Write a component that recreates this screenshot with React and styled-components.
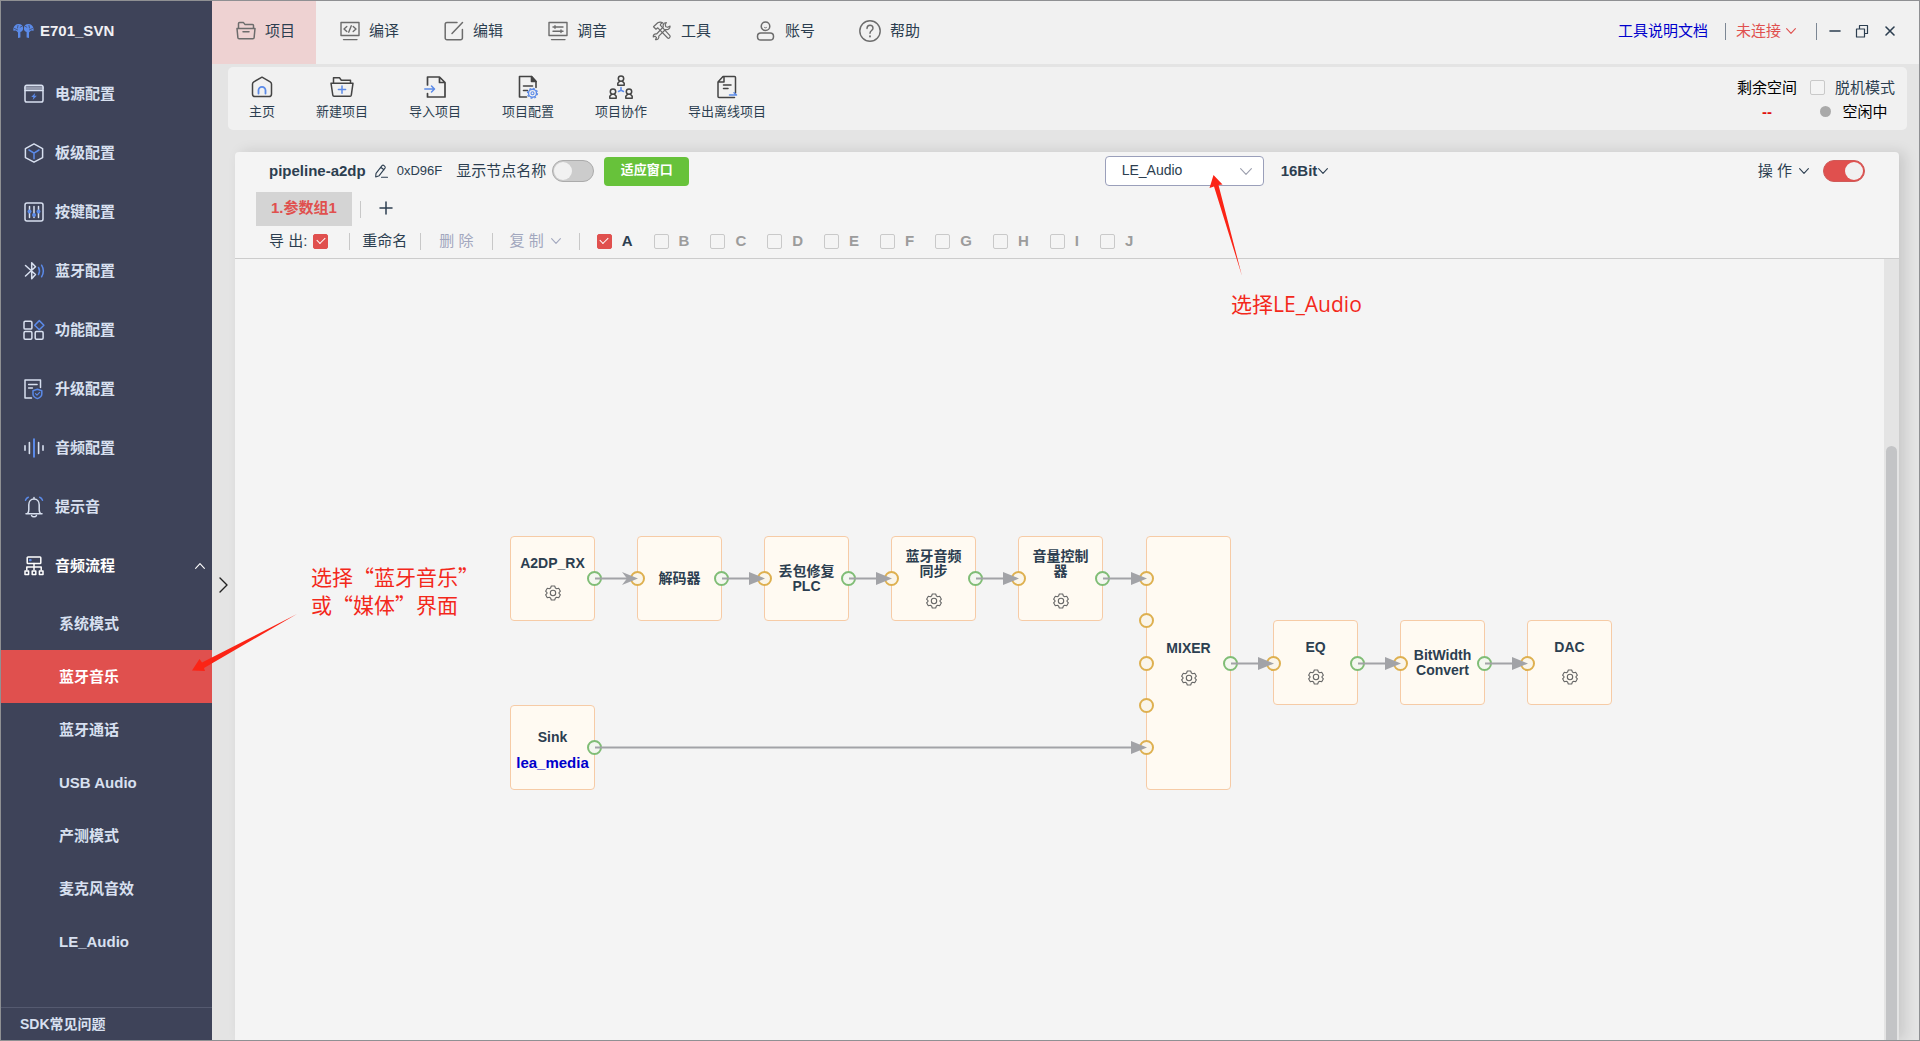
import React from 'react';
import styled, { createGlobalStyle, css } from 'styled-components';

const ink = '#2c3e50';
const red = '#e0504e';
const blue = '#5b8ae8';

const GlobalStyle = createGlobalStyle`
  *, *::before, *::after { box-sizing: border-box; }
  body {
    margin: 0;
    font-family: "Liberation Sans", "Noto Sans CJK SC", sans-serif;
    font-size: 15px;
    line-height: 20px;
    color: ${ink};
  }
  button, select, input { font: inherit; color: inherit; margin: 0; }
  a { text-decoration: none; }
`;

/* ---------- frame ---------- */

const Window = styled.div`
  position: relative;
  display: flex;
  height: 100vh;
  border: 1px solid #8f9093;
  background: #e4e4e4;
  overflow: hidden;
`;

const Main = styled.main`
  flex: 1;
  min-width: 0;
  display: flex;
  flex-direction: column;
`;

const PlainButton = styled.button`
  display: flex;
  align-items: center;
  padding: 0;
  border: 0;
  background: none;
  white-space: nowrap;
  cursor: pointer;
`;

const Svg = styled.svg`
  display: block;
  flex: none;
  overflow: visible;
  fill: none;
  stroke: currentColor;
  stroke-linecap: round;
  stroke-linejoin: round;
`;

/* ---------- sidebar ---------- */

const Sidebar = styled.aside`
  flex: none;
  width: 211px;
  display: flex;
  flex-direction: column;
  background: #3e4359;
  color: #d8e0f0;
  font-weight: 700;
`;

const Brand = styled.div`
  display: flex;
  align-items: center;
  gap: 6px;
  height: 60px;
  padding-left: 12px;
  color: #f0f0f4;
`;

const Menu = styled.nav`
  flex: 1;
  min-height: 0;
  padding-top: 3px;
  overflow: hidden;
`;

const MenuItem = styled(PlainButton)`
  width: 100%;
  height: 59px;
  padding: 0 7px 0 23px;
  gap: 11px;
  font-weight: 700;
  color: ${(p) => (p.$open ? '#ffffff' : 'inherit')};
  & > :nth-child(3) { margin-left: auto; }
`;

const SubMenu = styled.div`
  padding-top: 2px;
`;

const SubItem = styled(PlainButton)`
  width: 100%;
  height: 53px;
  padding-left: 58px;
  font-weight: 700;
  ${(p) => p.$active && css`
    background: ${red};
    color: #ffffff;
  `}
`;

const SidebarFooter = styled.a`
  display: block;
  padding: 6px 19px;
  border-top: 1px solid #555a70;
  font-size: 14px;
  color: inherit;
`;

/* ---------- header ---------- */

const Header = styled.header`
  flex: none;
  display: flex;
  justify-content: space-between;
  height: 63px;
  background: #f1f1f1;
`;

const Tabs = styled.nav`
  display: flex;
`;

const Tab = styled(PlainButton)`
  justify-content: center;
  width: 104px;
  height: 63px;
  padding: 0 0 3px 3px;
  gap: 9px;
  background: ${(p) => (p.$active ? '#eed2d2' : 'transparent')};
  svg { color: #6c6c6c; }
`;

const HeaderTools = styled.div`
  display: flex;
  align-items: center;
  padding: 0 22px 3px 0;
`;

const DocLink = styled.a`
  margin-right: 17px;
  color: #0000cc;
`;

const Divider = styled.span`
  flex: none;
  width: 1px;
  height: 17px;
  background: ${(p) => (p.$dark ? '#7c8794' : '#c8c8c8')};
`;

const Connection = styled(PlainButton)`
  gap: 5px;
  margin: 0 20px 0 10px;
  color: ${red};
`;

const WindowButtons = styled.div`
  display: flex;
  gap: 14px;
  margin-left: 12px;
`;

/* ---------- toolbar ---------- */

const Toolbar = styled.section`
  flex: none;
  display: flex;
  justify-content: space-between;
  align-items: center;
  height: 63px;
  margin: 3px 12px 0 16px;
  padding: 0 12px 0 21px;
  border-radius: 5px;
  background: #f1f1f1;
`;

const ToolList = styled.div`
  display: flex;
  gap: 41px;
`;

const Tool = styled(PlainButton)`
  flex-direction: column;
  gap: 3px;
  font-size: 13px;
  svg { color: #444444; }
`;

const ToolIcon = styled.span`
  display: grid;
  place-items: center;
  height: 24px;
`;

const Status = styled.div`
  display: flex;
  gap: 13px;
  padding-top: 2px;
  line-height: 24px;
  color: #000000;
`;

const StatusColumn = styled.div`
  display: flex;
  flex-direction: column;
  align-items: center;
`;

const Remaining = styled.strong`
  color: #e01010;
`;

const CheckLabel = styled.label`
  display: flex;
  align-items: center;
  gap: ${(p) => (p.$tight ? '6px' : '10px')};
  white-space: nowrap;
  font-weight: ${(p) => (p.$bold ? 700 : 400)};
  color: ${(p) => (p.$muted ? '#9c9c9c' : ink)};
`;

const Idle = styled.span`
  display: flex;
  align-items: center;
  gap: 11px;
  padding-left: 3px;
  &::before {
    content: "";
    width: 11px;
    height: 11px;
    border-radius: 50%;
    background: #a9a9a9;
  }
`;

/* ---------- form controls ---------- */

const Checkbox = styled.input.attrs({ type: 'checkbox' })`
  appearance: none;
  flex: none;
  display: grid;
  place-items: center;
  width: 15px;
  height: 15px;
  border: 1px solid #c9c9c9;
  border-radius: 2px;
  background: #f4f4f4;
  &:checked {
    border-color: ${red};
    background: ${red};
  }
  &:checked::after {
    content: "";
    width: 8px;
    height: 5px;
    margin-bottom: 3px;
    border: solid #ffffff;
    border-width: 0 0 1px 1px;
    transform: rotate(-45deg);
  }
`;

const Switch = styled.input.attrs({ type: 'checkbox', role: 'switch' })`
  appearance: none;
  flex: none;
  display: flex;
  align-items: center;
  width: 42px;
  height: 22px;
  padding: 0 1px;
  border: 1px solid #ababab;
  border-radius: 11px;
  background: #cccccc;
  &::before {
    content: "";
    width: 18px;
    height: 18px;
    border-radius: 50%;
    background: #f1f1f1;
  }
  &:checked {
    justify-content: flex-end;
    border-color: #d05a58;
    background: ${red};
  }
`;

const FitButton = styled.button`
  width: 85px;
  height: 29px;
  padding: 0 0 2px;
  border: 0;
  border-radius: 4px;
  background: #67c23a;
  color: #ffffff;
  font-size: 13px;
  font-weight: 700;
`;

const SelectBox = styled.span`
  display: grid;
  align-items: center;
  width: 159px;
  & > * { grid-area: 1 / 1; }
  svg {
    justify-self: end;
    margin-right: 12px;
    color: #9a9dac;
    pointer-events: none;
  }
`;

const Select = styled.select`
  appearance: none;
  width: 100%;
  height: 30px;
  padding: 0 16px 2px;
  border: 1px solid #9a9fba;
  border-radius: 4px;
  background: #ffffff;
  font-size: 14px;
`;

/* ---------- panel ---------- */

const Workspace = styled.div`
  flex: 1;
  min-height: 0;
  display: flex;
  padding-right: 20px;
`;

const Collapse = styled(PlainButton)`
  flex: none;
  width: 23px;
  justify-content: center;
  color: #222222;
`;

const Panel = styled.section`
  flex: 1;
  min-width: 0;
  display: flex;
  flex-direction: column;
  margin-top: 22px;
  border-radius: 4px 4px 0 0;
  background: #f4f4f4;
  box-shadow: 6px 0 14px rgba(0, 0, 0, 0.12);
`;

const PanelHeader = styled.div`
  flex: none;
  border-bottom: 1px solid #cccccc;
`;

const PanelRow = styled.div`
  display: flex;
  align-items: center;
  height: ${(p) => p.$height};
  padding: ${(p) => (p.$flush ? '0 21px' : '0 34px 2px 34px')};
`;

const Group = styled.div`
  display: flex;
  align-items: center;
  gap: ${(p) => p.$gap || '0'};
`;

const TitleRow = styled(PanelRow)`
  justify-content: space-between;
`;

const OutputGroup = styled(Group)`
  margin-right: 14px;
`;

const PipelineName = styled.h1`
  margin: 0 8px 0 0;
  font-size: 15px;
  font-weight: 700;
`;

const PipelineId = styled.span`
  margin: 0 14px 0 8px;
  font-size: 13px;
`;

const MenuButton = styled(PlainButton)`
  gap: ${(p) => (p.$tight ? '1px' : '7px')};
  font-weight: ${(p) => (p.$bold ? 700 : 400)};
  &:disabled { color: #a2a7be; }
`;

const GroupTab = styled(PlainButton)`
  height: 34px;
  padding: 0 15px 2px;
  margin-right: 8px;
  background: #d4d4d4;
  color: ${red};
  font-weight: 700;
`;

const AddButton = styled(PlainButton)`
  padding: 0 0 2px 18px;
`;

const Actions = styled.div`
  display: flex;
  align-items: center;
`;

const ActionCell = styled.div`
  display: flex;
  align-items: center;
  padding: 0 ${(p) => p.$right} 0 ${(p) => p.$left};
`;

const Slots = styled.div`
  display: flex;
  gap: 21px;
  margin-left: 17px;
`;

/* ---------- canvas ---------- */

const CanvasFrame = styled.div`
  flex: 1;
  min-height: 0;
  display: flex;
`;

const Canvas = styled.div`
  position: relative;
  flex: 1;
  overflow: hidden;
`;

const ScrollTrack = styled.div`
  flex: none;
  display: flex;
  flex-direction: column;
  justify-content: flex-end;
  width: 15px;
  padding: 0 2px;
  background: #e4e4e4;
`;

const ScrollThumb = styled.div`
  height: 76%;
  border-radius: 6px 6px 0 0;
  background: #c3c4c6;
`;

const Node = styled.div`
  position: absolute;
  left: ${(p) => p.$x}px;
  top: ${(p) => p.$y}px;
  width: 85px;
  height: ${(p) => p.$h}px;
  display: flex;
  flex-direction: column;
  align-items: center;
  justify-content: center;
  gap: ${(p) => (p.$linked ? '10px' : '14px')};
  padding: ${(p) => (p.$linked ? '4px 10px 0' : '0 10px')};
  border: 1px solid #f6cba6;
  border-radius: 4px;
  background: #fffaf2;
  font-size: 14px;
  font-weight: 700;
  line-height: 15px;
  text-align: center;
  svg { color: #666666; }
`;

const NodeLink = styled.a`
  font-size: 15px;
  color: #0000cc;
`;

const Port = styled.span`
  position: absolute;
  left: ${(p) => p.$x - 7}px;
  top: ${(p) => p.$y - 7}px;
  width: 15px;
  height: 15px;
  border: 2px solid ${(p) => (p.$out ? '#80bd76' : '#deb050')};
  border-radius: 50%;
  background: ${(p) => (p.$out ? '#f4f7f0' : '#faf5ea')};
`;

const Edges = styled.svg`
  position: absolute;
  inset: 0;
  width: 100%;
  height: 100%;
  pointer-events: none;
`;

const Note = styled.p`
  position: absolute;
  left: ${(p) => p.$x}px;
  top: ${(p) => p.$y}px;
  margin: 0;
  font-family: ${(p) => (p.$latin ? '"Open Sans", ' : '')}"Noto Sans CJK SC", sans-serif;
  font-size: 21px;
  line-height: 28px;
  color: #f3281b;
  white-space: nowrap;
`;

const NoteArrows = styled(Edges)`
  fill: #fb2416;
`;

/* ---------- icons ---------- */

const Icon = ({ w = 20, h = w, sw = 1.5, children }) => (
  <Svg width={w} height={h} viewBox={`0 0 ${w} ${h}`} strokeWidth={sw} aria-hidden="true">
    {children}
  </Svg>
);

const Chevron = ({ w = 10, h = 6, up }) => (
  <Icon w={w} h={h} sw={1.1}>
    <path d={up ? `M.6 ${h - 0.7}L${w / 2} .7l${w / 2 - 0.6} ${h - 1.4}` : `M.6 .7L${w / 2} ${h - 0.7}l${w / 2 - 0.6} ${1.4 - h}`} />
  </Icon>
);

const Logo = () => (
  <Icon w={21} h={16} sw={1}>
    <g fill={blue} stroke="none">
      <path d="M.4 7.800C0 4.500 1.800 1.400 5 1.100c2.900-.3 4.900 1.400 5.100 3.800.1 2.200-1 3.600-2.700 4.200V14.600L5 15V9.500L3 7.500z" />
      <path d="M20.600 7.800C21 4.500 19.200 1.400 16 1.100c-2.900-.3-4.900 1.400-5.100 3.800-.1 2.200 1 3.600 2.700 4.200V14.600l2.400.4V9.500l2-2z" />
    </g>
    <g stroke="#3e4359" strokeWidth=".7">
      <path d="M1.500 5.500l3 1.300M5 2.500L4.500 5M7.200 4.200l1.800-1M19.500 5.500l-3 1.300M16 2.500l.5 2.500M13.800 4.200l-1.800-1" />
    </g>
  </Icon>
);

const menuIcons = {
  power: (
    <Icon>
      <path d="M1 6.500V3a1.800 1.800 0 0 1 1.800-1.800h14.400A1.800 1.800 0 0 1 19 3v3.500" />
      <path d="M1 6.500h18v9.800a1.800 1.800 0 0 1-1.800 1.800H2.800A1.800 1.800 0 0 1 1 16.300z" />
      <path d="M1.600 4h16.800" strokeWidth="3.500" opacity=".55" />
      <path d="M11.200 9L7.200 13h2.200l-.7 3 4.100-4.200h-2.300z" fill={blue} stroke="none" />
    </Icon>
  ),
  board: (
    <Icon>
      <path d="M10 .9l8.600 4.700v9L10 19.200l-8.600-4.600v-9z" />
      <path d="M5 7l5 3.200L15 7M10 10.200v5.500" stroke={blue} />
    </Icon>
  ),
  keys: (
    <Icon>
      <rect x="1" y="1" width="18" height="18" rx="2" />
      <path d="M5.500 4.500v11M10 4.500v11M14.500 4.500v11" />
      <g fill={blue} stroke="none">
        <circle cx="5.500" cy="9.500" r="2" />
        <circle cx="10" cy="13" r="2" />
        <circle cx="14.500" cy="9.500" r="2" />
      </g>
    </Icon>
  ),
  bluetooth: (
    <Icon>
      <path d="M1.500 4.500l10 9L7.700 17.800V1.800l3.800 3.900-10 9.300" />
      <path d="M14.500 6.500c1.300 2.200 1.300 4.800 0 7M17.600 4.200c2.200 3.700 2.200 8 0 11.600" stroke={blue} />
    </Icon>
  ),
  feature: (
    <Icon>
      <rect x="0" y="1.200" width="7.900" height="7.900" rx="1.200" />
      <rect x="0" y="11.600" width="7.900" height="7.600" rx="1.200" />
      <rect x="11.200" y="11.600" width="7.900" height="7.600" rx="1.200" />
      <path d="M15.300 .6l4.600 4.600-4.600 4.600-4.600-4.600z" stroke={blue} />
    </Icon>
  ),
  upgrade: (
    <Icon>
      <path d="M7.500 19H1V1h15.500v7.500M4.600 5.400h8.500M4.600 9h3.800" />
      <path d="M13.400 10.300l4.400 1.400v3.200c0 2.200-1.800 3.700-4.400 4.700-2.600-1-4.400-2.500-4.400-4.700v-3.200z" stroke={blue} />
      <path d="M11.500 14.600l1.500 1.500 2.600-2.700" stroke={blue} strokeWidth="1.200" />
    </Icon>
  ),
  audio: (
    <Icon sw={1.600}>
      <path d="M1 7.800v4.400M5.400 4.500v11M14.600 4.500v11M19 7.800v4.400" />
      <path d="M10 1.200v17.600" stroke={blue} strokeWidth="2" />
    </Icon>
  ),
  bell: (
    <Icon w={20} h={22}>
      <path d="M2 17.700h16M3.600 17.500c1-1.200 1.200-2.200 1.200-3.800V8.800C4.800 5.500 6.800 3 10 3s5.200 2.500 5.200 5.800v4.900c0 1.600.2 2.600 1.200 3.800M10 1.500V3M7.600 19.600c.6 1 1.400 1.200 2.400 1.200s1.800-.2 2.400-1.200" />
      <path d="M1.500 4.200C2 2.800 2.900 1.800 4.300 1.300M18.500 4.200c-.5-1.400-1.400-2.400-2.800-2.900" stroke={blue} />
    </Icon>
  ),
  flow: (
    <Icon>
      <rect x="3.200" y="1" width="13.600" height="6.600" rx=".8" />
      <path d="M10 7.600v6.200M2.800 14v-3h14.400v3" />
      <rect x="1" y="15" width="3.600" height="3.600" />
      <rect x="8.200" y="15" width="3.600" height="3.600" />
      <rect x="15.400" y="15" width="3.600" height="3.600" />
      <path d="M6 4.200h.6" stroke={blue} strokeWidth="2.200" />
    </Icon>
  ),
};

const tabIcons = {
  project: (
    <Icon>
      <path d="M2.500 7.300V2.600a1 1 0 0 1 1-1h4l1.600 2h7.400a1 1 0 0 1 1 1v2.700M1 7.500h18l-.9 9.200a1.200 1.200 0 0 1-1.200 1.100H3.100a1.200 1.200 0 0 1-1.200-1.100zM7 10.700h6" />
    </Icon>
  ),
  compile: (
    <Icon>
      <path d="M1 1.500h18v13H1zM3.500 18.600h13.500M6.800 5.500L4 8l2.800 2.500M13.200 5.500L16 8l-2.800 2.500M11.300 4.800L8.700 11.200" strokeWidth="1.400" />
    </Icon>
  ),
  edit: (
    <Icon>
      <path d="M13 1.500H3a1.800 1.800 0 0 0-1.800 1.800v13.600a1.800 1.800 0 0 0 1.800 1.800h13.600a1.800 1.800 0 0 0 1.800-1.800V8.500M18.500 1.500L8 12.500" />
    </Icon>
  ),
  tune: (
    <Icon>
      <path d="M1 1.500h18v13H1zM3.500 18.600h13.500M5 6h10M5 10.200h10M7 4.700v2.600M13 8.900v2.600" strokeWidth="1.400" />
    </Icon>
  ),
  tools: (
    <Icon sw={1.200}>
      <path d="M1.500 5.800L5.700 1.800c1.600-.8 3.500-.7 5 0-1.500.3-2.300 1.200-2.400 2.300l9.600 10.600c.9 1.100-.9 3.200-2.200 2.300L5.800 6.800 4 8.200z" />
      <path d="M14.300 1.500c-2.500.2-3.700 2.200-3 4.400L4.600 13c-2-.5-3.600 1-3.300 3l1.700-.8 1.500 1.500-1 1.900c2.200.3 3.700-1.300 3.300-3.400l6.700-6.700c2.500.8 4.700-.8 4.600-3.500l-2.300 1.300-2-.6-.6-2z" />
    </Icon>
  ),
  account: (
    <Icon>
      <circle cx="9.500" cy="5.300" r="4.300" />
      <rect x="1.500" y="12" width="16" height="7" rx="3.300" />
      <path d="M8.500 6.500c.6.500 1.400.5 2 0" strokeWidth="1" />
    </Icon>
  ),
  help: (
    <Icon w={22} sw={1.400}>
      <circle cx="11" cy="11" r="10.200" />
      <path d="M8 8.500c0-2 1.200-3.200 3-3.200s3 1.200 3 2.900c0 2.300-3 2.400-3 5" />
      <path d="M11 16.100v.4" strokeWidth="1.800" />
    </Icon>
  ),
};

const person = (x, y) => (
  <g transform={`translate(${x} ${y})`}>
    <circle cx="4" cy="3.600" r="2.700" />
    <path d="M2.600 6.200L.8 8.300V10.300h6.400V8.300L5.400 6.200" />
  </g>
);

const toolIcons = {
  home: (
    <Icon w={22}>
      <path d="M11 1.200l8.200 4.600q1.300.8 1.300 2.200v10a2.600 2.600 0 0 1-2.600 2.600H4.100A2.600 2.600 0 0 1 1.500 18V8q0-1.400 1.300-2.200z" />
      <path d="M7.500 17.500v-3.200a3.500 3.500 0 0 1 7 0v3.200" stroke={blue} strokeWidth="1.800" />
    </Icon>
  ),
  create: (
    <Icon w={24} h={22}>
      <path d="M3.500 7V1.800h6l1.800 2.400h9.200V7M1 7.200h22l-1.700 12a1.200 1.200 0 0 1-1.200 1H4a1.200 1.200 0 0 1-1.200-1z" />
      <path d="M12 10v7.200M8.400 13.600h7.200" stroke={blue} />
    </Icon>
  ),
  importIn: (
    <Icon w={22} sw={1.700}>
      <path d="M3.500 9V1h12l5.500 5.500V21H3.500v-3.500M15.500 1v5.500H21" />
      <path d="M.8 13h9.500M7.500 10l3 3-3 3" stroke={blue} strokeWidth="1.500" />
    </Icon>
  ),
  config: (
    <Icon w={22} h={24} sw={1.600}>
      <path d="M9.500 22H2.500V1.500h12L19 6.500v6M6.500 11h9M6.500 15.500h4" />
      <path d="M14.500 1.500v5H19z" fill="currentColor" />
      <g stroke={blue} strokeWidth="1.400">
        <circle cx="15.500" cy="18.300" r="4" />
        <circle cx="15.500" cy="18.300" r="1.500" strokeWidth="1.100" />
        <circle cx="15.500" cy="18.300" r="5" strokeWidth="1.200" strokeDasharray="1.900 2" strokeLinecap="butt" />
      </g>
    </Icon>
  ),
  team: (
    <Icon w={26} h={24}>
      {person(9, 0)}
      {person(1, 13)}
      {person(17, 13)}
      <path d="M13 12.500v3M10.500 16.500l2.500-1.200 2.500 1.200" stroke={blue} />
    </Icon>
  ),
  exportOut: (
    <Icon w={22} h={24}>
      <path d="M14 22.500H3a1 1 0 0 1-1-1V7l5-5.500h11.500a1 1 0 0 1 1 1V18M2.500 7H8V1.500M7.500 10h7.500M7.500 13.500h4.500M14 22.500h4.500" />
      <path d="M13.500 20h6.500M18 17.800l2.500 2.200" stroke={blue} />
    </Icon>
  ),
};

const PencilIcon = () => (
  <Icon w={15} h={15} sw={1.100}>
    <path d="M2 9.300L8 1.600q1-.9 2 0l.8.700q.8.900.2 1.800L5.200 11.700l-3.500 1.200zM6.800 3.300l3.100 2.500M7.500 13.200h6" />
  </Icon>
);

const teeth = 'M6.300 1h3.400l.7 2 1.300.7 2-.4 1.700 2.900L14 7.700v.6l1.400 1.500-1.700 2.900-2-.4-1.300.7-.7 2H6.300l-.7-2-1.300-.7-2 .4L.6 9.800 2 8.300v-.6L.6 6.200l1.700-2.900 2 .4L5.600 3z';

const GearIcon = () => (
  <Icon w={16} sw={1.100}>
    <path d={teeth} />
    <circle cx="8" cy="8" r="2.700" />
  </Icon>
);

/* ---------- data ---------- */

const menu = [
  ['power', '电源配置'],
  ['board', '板级配置'],
  ['keys', '按键配置'],
  ['bluetooth', '蓝牙配置'],
  ['feature', '功能配置'],
  ['upgrade', '升级配置'],
  ['audio', '音频配置'],
  ['bell', '提示音'],
];

const subMenu = ['系统模式', '蓝牙音乐', '蓝牙通话', 'USB Audio', '产测模式', '麦克风音效', 'LE_Audio'];

const tabs = [
  ['project', '项目'],
  ['compile', '编译'],
  ['edit', '编辑'],
  ['tune', '调音'],
  ['tools', '工具'],
  ['account', '账号'],
  ['help', '帮助'],
];

const tools = [
  ['home', '主页'],
  ['create', '新建项目'],
  ['importIn', '导入项目'],
  ['config', '项目配置'],
  ['team', '项目协作'],
  ['exportOut', '导出离线项目'],
];

const slots = ['A', 'B', 'C', 'D', 'E', 'F', 'G', 'H', 'I', 'J'];

const nodes = [
  { x: 275, y: 277, label: 'A2DP_RX', gear: true, out: 319 },
  { x: 402, y: 277, label: '解码器', ins: [319], out: 319 },
  { x: 529, y: 277, label: '丢包修复 PLC', ins: [319], out: 319 },
  { x: 656, y: 277, label: '蓝牙音频同步', gear: true, ins: [319], out: 319 },
  { x: 783, y: 277, label: '音量控制器', gear: true, ins: [319], out: 319 },
  { x: 911, y: 277, h: 254, label: 'MIXER', gear: true, ins: [319, 361, 404, 446, 488], out: 404 },
  { x: 1038, y: 361, label: 'EQ', gear: true, ins: [404], out: 404 },
  { x: 1165, y: 361, label: 'BitWidth Convert', ins: [404], out: 404 },
  { x: 1292, y: 361, label: 'DAC', gear: true, ins: [404] },
  { x: 275, y: 446, label: 'Sink', link: 'lea_media', out: 488 },
];

const edges = [
  [360, 402, 319, true],
  [487, 529, 319],
  [614, 656, 319],
  [741, 783, 319],
  [868, 911, 319],
  [996, 1038, 404],
  [1123, 1165, 404],
  [1250, 1292, 404],
  [360, 911, 488],
];

/* ---------- page ---------- */

export default function App() {
  return (
    <Window>
      <GlobalStyle />
      <Sidebar>
        <Brand><Logo />E701_SVN</Brand>
        <Menu>
          {menu.map(([icon, label]) => (
            <MenuItem key={icon}>{menuIcons[icon]}<span>{label}</span></MenuItem>
          ))}
          <MenuItem $open aria-expanded="true">
            {menuIcons.flow}<span>音频流程</span><Chevron up />
          </MenuItem>
          <SubMenu>
            {subMenu.map((label) => (
              <SubItem key={label} $active={label === '蓝牙音乐'}>{label}</SubItem>
            ))}
          </SubMenu>
        </Menu>
        <SidebarFooter href="#faq">SDK常见问题</SidebarFooter>
      </Sidebar>

      <Main>
        <Header>
          <Tabs>
            {tabs.map(([icon, label]) => (
              <Tab key={icon} $active={icon === 'project'}>{tabIcons[icon]}{label}</Tab>
            ))}
          </Tabs>
          <HeaderTools>
            <DocLink href="#docs">工具说明文档</DocLink>
            <Divider $dark />
            <Connection>未连接<Chevron /></Connection>
            <Divider $dark />
            <WindowButtons>
              <PlainButton aria-label="最小化"><Icon w={12} sw={1.600}><path d="M1 6h10" /></Icon></PlainButton>
              <PlainButton aria-label="还原">
                <Icon w={14} sw={1.200}><path d="M1.500 5h8v8h-8zM4.500 5V1.500h8v8H9.500" /></Icon>
              </PlainButton>
              <PlainButton aria-label="关闭"><Icon w={14} sw={1.600}><path d="M3 3l8 8M11 3l-8 8" /></Icon></PlainButton>
            </WindowButtons>
          </HeaderTools>
        </Header>

        <Toolbar>
          <ToolList>
            {tools.map(([icon, label]) => (
              <Tool key={icon}><ToolIcon>{toolIcons[icon]}</ToolIcon>{label}</Tool>
            ))}
          </ToolList>
          <Status>
            <StatusColumn>
              <span>剩余空间</span>
              <Remaining>--</Remaining>
            </StatusColumn>
            <StatusColumn>
              <CheckLabel><Checkbox />脱机模式</CheckLabel>
              <Idle>空闲中</Idle>
            </StatusColumn>
          </Status>
        </Toolbar>

        <Workspace>
          <Collapse aria-label="收起侧栏">
            <Icon w={9} h={16} sw={1.400}><path d="M1 1l7 7-7 7" /></Icon>
          </Collapse>
          <Panel>
            <PanelHeader>
              <TitleRow $height="40px">
                <Group>
                  <PipelineName>pipeline-a2dp</PipelineName>
                  <PlainButton aria-label="重命名流程"><PencilIcon /></PlainButton>
                  <PipelineId>0xD96F</PipelineId>
                  <Group $gap="10px">
                    <CheckLabel $tight>显示节点名称<Switch /></CheckLabel>
                    <FitButton>适应窗口</FitButton>
                  </Group>
                </Group>
                <OutputGroup $gap="17px">
                  <SelectBox>
                    <Select aria-label="输出" defaultValue="LE_Audio">
                      <option>LE_Audio</option>
                    </Select>
                    <Chevron w={12} h={7} />
                  </SelectBox>
                  <MenuButton $bold $tight>16Bit<Chevron /></MenuButton>
                </OutputGroup>
                <Group $gap="14px">
                  <MenuButton>操 作<Chevron /></MenuButton>
                  <Switch aria-label="启用流程" defaultChecked />
                </Group>
              </TitleRow>
              <PanelRow $height="34px" $flush>
                <GroupTab>1.参数组1</GroupTab>
                <Divider />
                <AddButton aria-label="新增参数组"><Icon w={14} sw={1.500}><path d="M7 1v12M1 7h12" /></Icon></AddButton>
              </PanelRow>
              <PanelRow $height="32px">
                <Actions>
                  <ActionCell $left="0" $right="21px"><CheckLabel $tight>导 出:<Checkbox defaultChecked /></CheckLabel></ActionCell>
                  <Divider />
                  <ActionCell $left="12px" $right="13px"><MenuButton>重命名</MenuButton></ActionCell>
                  <Divider />
                  <ActionCell $left="18px" $right="18px"><MenuButton disabled>删 除</MenuButton></ActionCell>
                  <Divider />
                  <ActionCell $left="17px" $right="18px"><MenuButton disabled>复 制<Chevron /></MenuButton></ActionCell>
                  <Divider />
                </Actions>
                <Slots>
                  {slots.map((slot) => (
                    <CheckLabel key={slot} $bold $muted={slot !== 'A'}>
                      <Checkbox defaultChecked={slot === 'A'} />{slot}
                    </CheckLabel>
                  ))}
                </Slots>
              </PanelRow>
            </PanelHeader>

            <CanvasFrame>
              <Canvas>
                {nodes.map((n) => (
                  <React.Fragment key={n.label}>
                    <Node $x={n.x} $y={n.y} $h={n.h || 85} $linked={Boolean(n.link)}>
                      <span>{n.label}</span>
                      {n.gear && <GearIcon />}
                      {n.link && <NodeLink href="#lea_media">{n.link}</NodeLink>}
                    </Node>
                    {(n.ins || []).map((y) => <Port key={y} $x={n.x} $y={y} />)}
                    {n.out && <Port $out $x={n.x + 84} $y={n.out} />}
                  </React.Fragment>
                ))}
                <Edges>
                  {edges.map(([from, to, y, notched]) => (
                    <g key={`${from}-${y}`}>
                      <path d={`M${from} ${y + 0.5}H${to - 10}`} stroke="#a2a3a7" strokeWidth="2" />
                      <path
                        d={`M${to + 1} ${y + 0.5}l-16-6.500${notched ? 'l5 6.500l-5 6.500' : 'v13'}z`}
                        fill="#a2a3a7"
                      />
                    </g>
                  ))}
                </Edges>
              </Canvas>
              <ScrollTrack><ScrollThumb /></ScrollTrack>
            </CanvasFrame>
          </Panel>
        </Workspace>
      </Main>

      <NoteArrows>
        <path d="M296 613L201 661.500 198.500 658 191 669.500 204 670 203 667z" />
        <path d="M1241 275L1213 185.500 1208.500 187 1212.500 174 1221.500 183.500 1217.500 184z" />
      </NoteArrows>
      <Note $x={310} $y={561} lang="zh-CN">选择“蓝牙音乐”<br />或“媒体”界面</Note>
      <Note $x={1230} $y={289} $latin>选择LE_Audio</Note>
    </Window>
  );
}
